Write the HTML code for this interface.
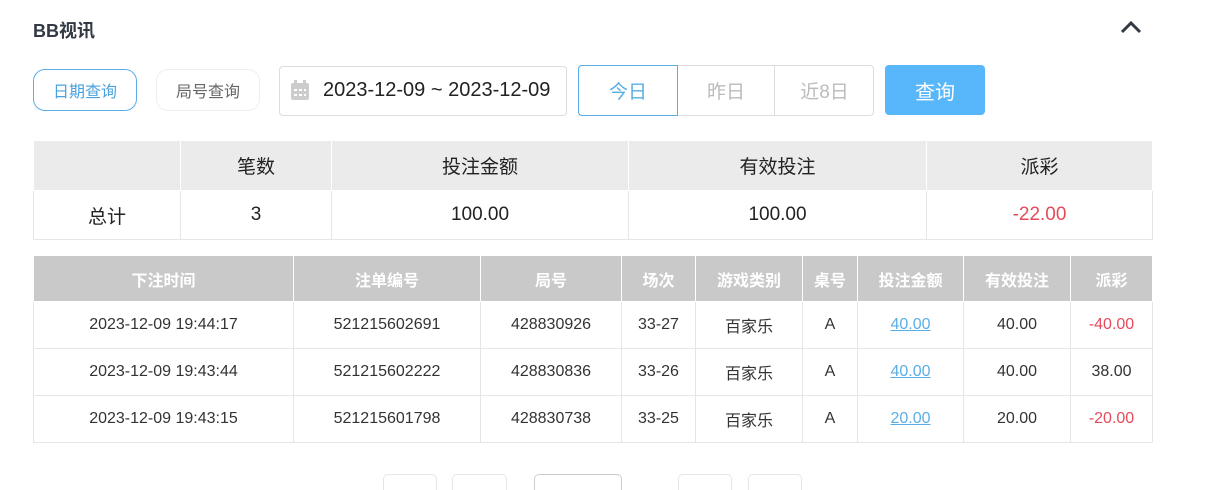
<!DOCTYPE html>
<html><head><meta charset="utf-8"><style>
*{box-sizing:border-box;margin:0;padding:0}
html,body{width:1216px;height:490px;overflow:hidden}
body{background:#fff;font-family:"Liberation Sans","Noto Sans CJK SC",sans-serif;color:#222;position:relative}
.a{position:absolute}
.title{left:33px;top:17px;font-size:18px;font-weight:bold;color:#333a44}
.btn{border-radius:12px;display:flex;align-items:center;justify-content:center;font-size:16px}
table{border-collapse:collapse;position:absolute;table-layout:fixed}
td,th{text-align:center;border:1px solid #e6e6e6}
.s th{background:#ebebeb;font-weight:normal;font-size:19px;height:50px;border-color:#fff}
.s td{font-size:19px;height:49px}
.d th{background:#c9c9c9;color:#fff;font-size:16px;height:46px;border-color:#fff}
.d td{font-size:16px;height:47px;color:#333}
td.red{color:#e64a5a}
td.lnk{color:#5aaee6;text-decoration:underline}
.pg{top:474px;height:30px;border:1px solid #e6e6e6;border-bottom:none;border-radius:5px 5px 0 0}
</style></head><body>
<div class="a title">BB视讯</div>
<svg class="a" style="left:1120px;top:19px" width="22" height="16" viewBox="0 0 22 16"><path d="M2 13 L11 4 L20 13" stroke="#333a44" stroke-width="3" fill="none"/></svg>
<div class="a btn" style="left:33px;top:69px;width:104px;height:42px;border:1px solid #5aaee6;color:#4aa3e0">日期查询</div>
<div class="a btn" style="left:156px;top:69px;width:104px;height:42px;border:1px solid #eee;color:#666">局号查询</div>
<div class="a" style="left:279px;top:66px;width:288px;height:50px;border:1px solid #ddd;border-radius:4px"></div>
<svg class="a" style="left:290px;top:80px" width="20" height="21" viewBox="0 0 20 21"><rect x="1" y="3" width="18" height="17" rx="2" fill="#ccc"/><rect x="4" y="0" width="3" height="5" fill="#ccc"/><rect x="13" y="0" width="3" height="5" fill="#ccc"/><g fill="#fff"><rect x="4" y="9" width="3" height="2"/><rect x="9" y="9" width="3" height="2"/><rect x="14" y="9" width="2" height="2"/><rect x="4" y="14" width="3" height="2"/><rect x="9" y="14" width="3" height="2"/><rect x="14" y="14" width="2" height="2"/></g></svg>
<div class="a" style="left:323px;top:79px;font-size:20px;color:#222">2023-12-09 ~ 2023-12-09</div>
<div class="a" style="left:578px;top:65px;width:296px;height:51px;border:1px solid #ddd;border-radius:4px"></div>
<div class="a btn" style="left:578px;top:65px;width:100px;height:51px;border:1px solid #5aaee6;border-radius:4px 0 0 4px;color:#5aaee6;font-size:19px">今日</div>
<div class="a btn" style="left:678px;top:65px;width:97px;height:51px;border-right:1px solid #ddd;border-radius:0;color:#bbb;font-size:19px">昨日</div>
<div class="a btn" style="left:775px;top:65px;width:99px;height:51px;border-radius:0;color:#bbb;font-size:19px">近8日</div>
<div class="a btn" style="left:885px;top:65px;width:100px;height:50px;background:#58b7fb;border-radius:4px;color:#fff;font-size:20px">查询</div>
<table class="s" style="left:33px;top:140px;width:1119px">
<colgroup><col style="width:147px"><col style="width:151px"><col style="width:297px"><col style="width:298px"><col style="width:226px"></colgroup>
<tr><th></th><th>笔数</th><th>投注金额</th><th>有效投注</th><th>派彩</th></tr>
<tr><td>总计</td><td>3</td><td>100.00</td><td>100.00</td><td class="red">-22.00</td></tr>
</table>
<table class="d" style="left:33px;top:255px;width:1119px">
<colgroup><col style="width:260px"><col style="width:187px"><col style="width:141px"><col style="width:74px"><col style="width:107px"><col style="width:55px"><col style="width:106px"><col style="width:107px"><col style="width:82px"></colgroup>
<tr><th>下注时间</th><th>注单编号</th><th>局号</th><th>场次</th><th>游戏类别</th><th>桌号</th><th>投注金额</th><th>有效投注</th><th>派彩</th></tr>
<tr><td>2023-12-09 19:44:17</td><td>521215602691</td><td>428830926</td><td>33-27</td><td>百家乐</td><td>A</td><td class="lnk">40.00</td><td>40.00</td><td class="red">-40.00</td></tr>
<tr><td>2023-12-09 19:43:44</td><td>521215602222</td><td>428830836</td><td>33-26</td><td>百家乐</td><td>A</td><td class="lnk">40.00</td><td>40.00</td><td>38.00</td></tr>
<tr><td>2023-12-09 19:43:15</td><td>521215601798</td><td>428830738</td><td>33-25</td><td>百家乐</td><td>A</td><td class="lnk">20.00</td><td>20.00</td><td class="red">-20.00</td></tr>
</table>
<div class="a pg" style="left:383px;width:54px"></div>
<div class="a pg" style="left:452px;width:55px"></div>
<div class="a pg" style="left:534px;width:88px;border-color:#ccc"></div>
<div class="a pg" style="left:678px;width:54px"></div>
<div class="a pg" style="left:748px;width:54px"></div>
</body></html>
